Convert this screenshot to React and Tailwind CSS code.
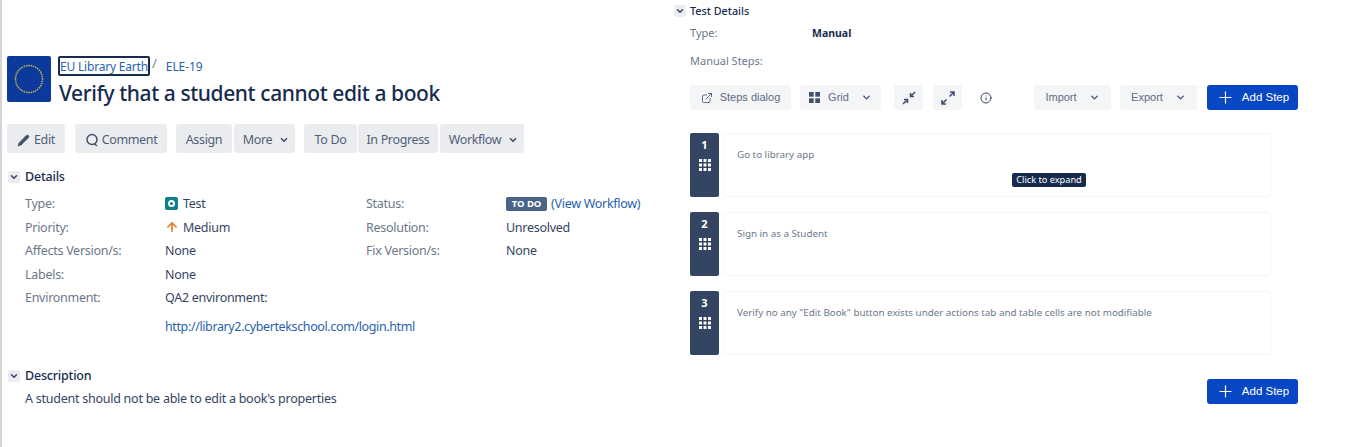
import React from "react";
import { ChevronDown, Pencil, ExternalLink, Info, Plus, ArrowUp } from "lucide-react";

const F = "font-['Noto_Sans','Open_Sans',sans-serif]";
const A = "font-['Liberation_Sans',Arial,sans-serif]";

function Toggle({ className = "" }) {
  return (
    <span className={`flex h-[12px] w-[12px] items-center justify-center rounded-[2px] bg-[#ebecf0] ${className}`}>
      <ChevronDown size={10} strokeWidth={3.5} className="text-[#344563]" />
    </span>
  );
}

function Btn({ w, children, className = "" }) {
  return (
    <div className={`flex h-[29px] items-center justify-center rounded-[3px] bg-[#ebecf0] pt-[3px] text-[12.5px] tracking-[-0.35px] text-[#505f79] ${w} ${className}`}>
      {children}
    </div>
  );
}

function ToolBtn({ w, children, className = "" }) {
  return (
    <div className={`flex h-[25px] items-center justify-center rounded-[3px] bg-[#f4f5f7] text-[11px] text-[#5e6c84] ${A} ${w} ${className}`}>
      {children}
    </div>
  );
}

function AddStep() {
  return (
    <div className={`flex h-[25px] w-[91px] items-center justify-center gap-[7px] rounded-[3px] bg-[#0747c4] text-[11.5px] text-white ${A}`}>
      <Plus size={19} strokeWidth={1.5} />
      <span>Add Step</span>
    </div>
  );
}

function Step({ n, text }) {
  return (
    <div className="flex h-[64px] gap-[4px]">
      <div className="flex w-[29px] flex-col items-center rounded-[2px] bg-[#344563] pt-[4px] text-white">
        <span className="text-[11px] font-bold leading-[16px]">{n}</span>
        <svg width="12" height="12" viewBox="0 0 12 12" className="mt-[6px]" fill="#fff">
          {[0, 4.5, 9].map((y) =>
            [0, 4.5, 9].map((x) => <rect key={`${x}-${y}`} x={x} y={y} width="3" height="3" />)
          )}
        </svg>
      </div>
      <div className="w-[548px] rounded-[3px] border border-[#f4f5f7] pl-[13px] pt-[14px] text-[9.8px] leading-[14px] text-[#6b778c]">
        {text}
      </div>
    </div>
  );
}

function Label({ children }) {
  return <div className="text-[#6b778c]">{children}</div>;
}

function Star({ a }) {
  const r = 13.5;
  const x = 22 + r * Math.cos(a);
  const y = 23 + r * Math.sin(a);
  return <circle cx={x} cy={y} r="0.9" fill="#b9a85a" />;
}

export default function App() {
  const stars = Array.from({ length: 36 }, (_, i) => (i * Math.PI) / 18);
  return (
    <div className={`flex h-[447px] w-[1370px] overflow-hidden bg-white ${F}`}>
      {/* Left column */}
      <div className="w-[676px] shrink-0 border-l-2 border-[#d4d4d4] pl-[5px] pt-[56px]">
        <div className="flex gap-[8px]">
          <svg width="44" height="46" viewBox="0 0 44 46" className="shrink-0 rounded-[2px]">
            <rect width="44" height="46" fill="#0b3a9c" />
            {stars.map((a, i) => (
              <Star key={i} a={a} />
            ))}
          </svg>
          <div className="min-w-0">
            <div className="-ml-[1px] flex h-[20px] items-center text-[#2a5fb0]">
              <span className="flex h-[20px] w-[92px] items-center justify-center whitespace-nowrap rounded-[2px] border-2 border-[#172b4d] pt-[1px] text-[12px] tracking-[-0.2px]">
                EU Library Earth
              </span>
              <span className="ml-[2px] -mt-[4px] text-[13px] text-[#7a869a]">/</span>
              <span className="ml-[9px] pt-[1px] text-[12px] tracking-[-0.1px]">ELE-19</span>
            </div>
            <h1 className="pt-[2px] text-[21px] font-medium leading-[30px] tracking-[-0.42px] text-[#172b4d]">
              Verify that a student cannot edit a book
            </h1>
          </div>
        </div>

        <div className="mt-[16px] flex">
          <Btn w="w-[58px]" className="gap-[4px]">
            <Pencil size={13} fill="#42526e" strokeWidth={1} className="text-[#42526e]" />
            Edit
          </Btn>
          <Btn w="w-[92px]" className="ml-[10px] gap-[3px]">
            <svg width="14" height="14" viewBox="0 0 14 14" fill="none" stroke="#42526e" strokeWidth="1.5">
              <circle cx="7" cy="6.5" r="5" />
              <path d="M9 10.5 12 13" />
            </svg>
            Comment
          </Btn>
          <Btn w="w-[56px]" className="ml-[9px]">Assign</Btn>
          <Btn w="w-[61px]" className="ml-[2px] gap-[7px] pl-[3px]">
            More
            <ChevronDown size={10} strokeWidth={4} className="text-[#42526e]" />
          </Btn>
          <Btn w="w-[53px]" className="ml-[9px]">To Do</Btn>
          <Btn w="w-[80px]" className="ml-[1px]">In Progress</Btn>
          <Btn w="w-[84px]" className="ml-[2px] gap-[7px] pl-[3px]">
            Workflow
            <ChevronDown size={10} strokeWidth={4} className="text-[#42526e]" />
          </Btn>
        </div>

        <div className="mt-[15px] flex items-center gap-[5px] pl-[1px] text-[12.5px] font-medium leading-[18px] tracking-[-0.2px] text-[#172b4d]">
          <Toggle />
          Details
        </div>

        <div className="mt-[6px] grid grid-cols-[140px_201px_140px_1fr] pl-[18px] text-[12.5px] leading-[23.6px] tracking-[-0.28px] text-[#344563]">
          <Label>Type:</Label>
          <div className="flex items-center gap-[5px]">
            <span className="flex h-[13px] w-[13px] items-center justify-center rounded-[2px] bg-[#0f7f8c]">
              <span className="h-[7px] w-[7px] rounded-full border-2 border-white" />
            </span>
            Test
          </div>
          <Label>Status:</Label>
          <div className="flex items-center gap-[4px] whitespace-nowrap">
            <span className="flex h-[14px] w-[41px] items-center justify-center rounded-[2px] bg-[#4a6388] text-[9.5px] font-bold tracking-normal text-white">
              TO DO
            </span>
            <span className="text-[#2a5fb0]">(View Workflow)</span>
          </div>

          <Label>Priority:</Label>
          <div className="flex items-center gap-[4px]">
            <ArrowUp size={14} strokeWidth={3} className="text-[#e97f33]" />
            Medium
          </div>
          <Label>Resolution:</Label>
          <div>Unresolved</div>

          <Label>Affects Version/s:</Label>
          <div>None</div>
          <Label>Fix Version/s:</Label>
          <div>None</div>

          <Label>Labels:</Label>
          <div className="col-span-3">None</div>

          <Label>Environment:</Label>
          <div className="col-span-3">QA2 environment:</div>

          <div />
          <div className="col-span-3 mt-[5px] tracking-[-0.38px] text-[#2a5fb0]">http://library2.cybertekschool.com/login.html</div>
        </div>

        <div className="mt-[28px] flex items-center gap-[5px] pl-[1px] text-[12.5px] font-medium leading-[18px] tracking-[-0.2px] text-[#172b4d]">
          <Toggle />
          Description
        </div>
        <div className="mt-[2px] pl-[18px] text-[12.5px] leading-[23px] tracking-[-0.25px] text-[#344563]">
          A student should not be able to edit a book's properties
        </div>
      </div>

      {/* Right column */}
      <div className="relative w-[694px] shrink-0 pt-[4px]">
        <div className="flex h-[14px] items-center gap-[4px] text-[10.8px] font-medium text-[#172b4d]">
          <Toggle className="-ml-[2px]" />
          Test Details
        </div>
        <div className="mt-[7px] flex pl-[14px] text-[11px] leading-[16px]">
          <span className="w-[122px] text-[#6b778c]">Type:</span>
          <span className="text-[10.5px] font-bold text-[#172b4d]">Manual</span>
        </div>
        <div className="mt-[12px] pl-[14px] text-[11px] leading-[16px] text-[#6b778c]">Manual Steps:</div>

        <div className="ml-[14px] mt-[16px] flex items-center">
          <ToolBtn w="w-[101px]" className="gap-[7px]">
            <ExternalLink size={12} strokeWidth={2} />
            Steps dialog
          </ToolBtn>
          <ToolBtn w="w-[81px]" className="ml-[9px]">
            <svg width="11" height="11" viewBox="0 0 11 11" fill="#42526e">
              <rect width="4.7" height="4.7" />
              <rect x="6.3" width="4.7" height="4.7" />
              <rect y="6.3" width="4.7" height="4.7" />
              <rect x="6.3" y="6.3" width="4.7" height="4.7" />
            </svg>
            <span className="ml-[8px]">Grid</span>
            <ChevronDown size={11} strokeWidth={3} className="ml-[12px] text-[#42526e]" />
          </ToolBtn>
          <ToolBtn w="w-[29px]" className="ml-[13px]">
            <svg width="14" height="14" viewBox="0 0 14 14" fill="none" stroke="#42526e" strokeWidth="1.6">
              <path d="M13 1 8.5 5.5M8.5 2v3.5H12M1 13l4.5-4.5M5.5 12V8.5H2" />
            </svg>
          </ToolBtn>
          <ToolBtn w="w-[29px]" className="ml-[10px]">
            <svg width="14" height="14" viewBox="0 0 14 14" fill="none" stroke="#42526e" strokeWidth="1.6">
              <path d="M8.5 5.5 13 1M9 1h4v4M5.5 8.5 1 13M1 9v4h4" />
            </svg>
          </ToolBtn>
          <Info size={12} strokeWidth={2} className="ml-[18px] text-[#344563]" />
          <ToolBtn w="w-[77px]" className="ml-[42px] gap-[12px]">
            Import
            <ChevronDown size={11} strokeWidth={3} className="text-[#42526e]" />
          </ToolBtn>
          <ToolBtn w="w-[77px]" className="ml-[9px] gap-[12px]">
            Export
            <ChevronDown size={11} strokeWidth={3} className="text-[#42526e]" />
          </ToolBtn>
          <div className="ml-[10px]">
            <AddStep />
          </div>
        </div>

        <div className="ml-[14px] mt-[23px] flex flex-col gap-[15px]">
          <Step n="1" text="Go to library app" />
          <Step n="2" text="Sign in as a Student" />
          <Step n="3" text={'Verify no any "Edit Book" button exists under actions tab and table cells are not modifiable'} />
        </div>

        <div className="ml-[531px] mt-[24px]">
          <AddStep />
        </div>

        <div className="absolute left-[336px] top-[173px] flex h-[14px] w-[74px] items-center justify-center rounded-[2px] bg-[#172b4d] text-[9.2px] text-white">
          Click to expand
        </div>
      </div>
    </div>
  );
}
